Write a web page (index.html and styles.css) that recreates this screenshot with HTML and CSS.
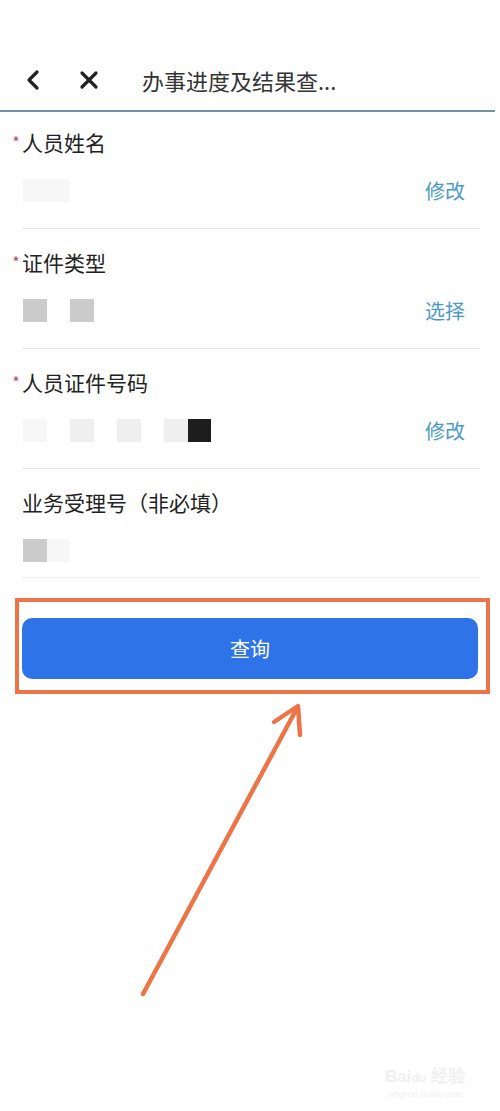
FILE: index.html
```html
<!DOCTYPE html>
<html lang="zh-CN">
<head>
    <meta charset="UTF-8">
    <meta name="viewport" content="width=device-width, initial-scale=1.0">
    <title>办事进度及结果查询</title>
    <link rel="stylesheet" href="styles.css">
</head>
<body>
    <div class="page">
        <header class="top-bar">
            <button class="icon-btn back" aria-label="返回">
                <svg width="16" height="22" viewBox="0 0 16 22"><path d="M12 3 L4 11 L12 19" fill="none" stroke="#222" stroke-width="3.2" stroke-linecap="round" stroke-linejoin="round"/></svg>
            </button>
            <button class="icon-btn close" aria-label="关闭">
                <svg width="20" height="20" viewBox="0 0 20 20"><path d="M3 3 L17 17 M17 3 L3 17" fill="none" stroke="#222" stroke-width="3.2" stroke-linecap="round"/></svg>
            </button>
            <h1 class="title">办事进度及结果查...</h1>
        </header>

        <form class="query-form">
            <div class="field first">
                <label class="field-label"><span class="req">*</span>人员姓名</label>
                <div class="field-value">
                    <div class="masked">
                        <span class="blk faint"></span>
                        <span class="blk faint"></span>
                    </div>
                    <a class="action">修改</a>
                </div>
            </div>

            <div class="field">
                <label class="field-label"><span class="req">*</span>证件类型</label>
                <div class="field-value">
                    <div class="masked">
                        <span class="blk gray"></span>
                        <span class="blk none"></span>
                        <span class="blk gray"></span>
                    </div>
                    <a class="action">选择</a>
                </div>
            </div>

            <div class="field">
                <label class="field-label"><span class="req">*</span>人员证件号码</label>
                <div class="field-value">
                    <div class="masked">
                        <span class="blk faint"></span>
                        <span class="blk none"></span>
                        <span class="blk light"></span>
                        <span class="blk none"></span>
                        <span class="blk light"></span>
                        <span class="blk none"></span>
                        <span class="blk light"></span>
                        <span class="blk dark"></span>
                    </div>
                    <a class="action">修改</a>
                </div>
            </div>

            <div class="field last">
                <label class="field-label">业务受理号（非必填）</label>
                <div class="field-value">
                    <div class="masked">
                        <span class="blk gray"></span>
                        <span class="blk faint"></span>
                    </div>
                </div>
            </div>

            <div class="highlight">
                <button type="button" class="submit-btn">查询</button>
            </div>
        </form>

        <svg class="pointer" width="500" height="1111" viewBox="0 0 500 1111">
            <g fill="none" stroke="#ec7446" stroke-width="4.5" stroke-linecap="round" stroke-linejoin="round">
                <path d="M143 994 L296 710"/>
                <path d="M274 722 L298 706 L300 735"/>
            </g>
        </svg>

        <div class="watermark">
            <div class="wm-logo">Bai<span class="wm-du">du</span> 经验</div>
            <div class="wm-url">jingyan.baidu.com</div>
        </div>
    </div>
</body>
</html>
```

FILE: styles.css
```css
body {
    margin: 0;
    background-color: #fff;
    font-family: "Noto Sans CJK SC", "Noto Sans", sans-serif;
    color: #222;
}

.page {
    position: relative;
    width: 500px;
    height: 1111px;
    overflow: hidden;
}

.top-bar {
    display: flex;
    align-items: center;
    height: 60px;
    margin-top: 50px;
    margin-right: 5px;
    border-bottom: 2px solid #6e94a8;
}

.icon-btn {
    display: flex;
    align-items: center;
    justify-content: center;
    padding: 0;
    border: none;
    background: none;
}

.back {
    margin-left: 25px;
}

.close {
    margin-left: 38px;
}

.title {
    margin: 0 0 0 43px;
    font-size: 22px;
    font-weight: normal;
    color: #333;
    line-height: 28px;
}

.query-form {
    margin: 0;
}

.field {
    margin: 0 20px 0 22px;
    padding: 19px 0 18px;
    border-bottom: 1px solid #e6e6e6;
}

.field.first {
    padding-top: 16px;
}

.field.last {
    padding-bottom: 7px;
    border-bottom-color: #efefef;
}

.field-label {
    display: block;
    font-size: 21px;
    line-height: 28px;
    color: #222;
}

.req {
    display: inline-block;
    width: 12px;
    margin-left: -12px;
    color: #b94a5e;
    font-size: 16px;
    text-align: center;
    vertical-align: top;
}

.field-value {
    display: flex;
    align-items: center;
    justify-content: space-between;
    height: 40px;
    margin-top: 14px;
}

.masked {
    display: flex;
    padding-left: 1px;
}

.blk {
    width: 23.5px;
    height: 23px;
}

.blk.none { background: transparent; }
.blk.faint { background: #f7f7f7; }
.blk.light { background: #efefef; }
.blk.gray { background: #cbcbcb; }
.blk.dark { background: #1d1d1d; }

.action {
    margin-right: 15px;
    font-size: 20px;
    color: #4b9bc6;
}

.highlight {
    margin: 20px 10px 0 15px;
    padding: 16px 8px 11px 3px;
    border: 4px solid #ec7446;
}

.submit-btn {
    display: block;
    width: 100%;
    height: 61px;
    border: none;
    border-radius: 10px;
    background-color: #2f73e8;
    color: #fff;
    font-family: "Noto Sans CJK SC", sans-serif;
    font-size: 20px;
}

.pointer {
    position: absolute;
    left: 0;
    top: 0;
    pointer-events: none;
}

.watermark {
    position: absolute;
    left: 385px;
    top: 1067px;
    color: #f0f0f0;
    text-align: center;
}

.wm-logo {
    font-family: "Liberation Sans", sans-serif;
    font-size: 17px;
    font-weight: bold;
    line-height: 20px;
}

.wm-du {
    font-size: 12px;
}

.wm-url {
    font-family: "Liberation Serif", serif;
    font-style: italic;
    font-size: 10px;
    line-height: 12px;
}
```
